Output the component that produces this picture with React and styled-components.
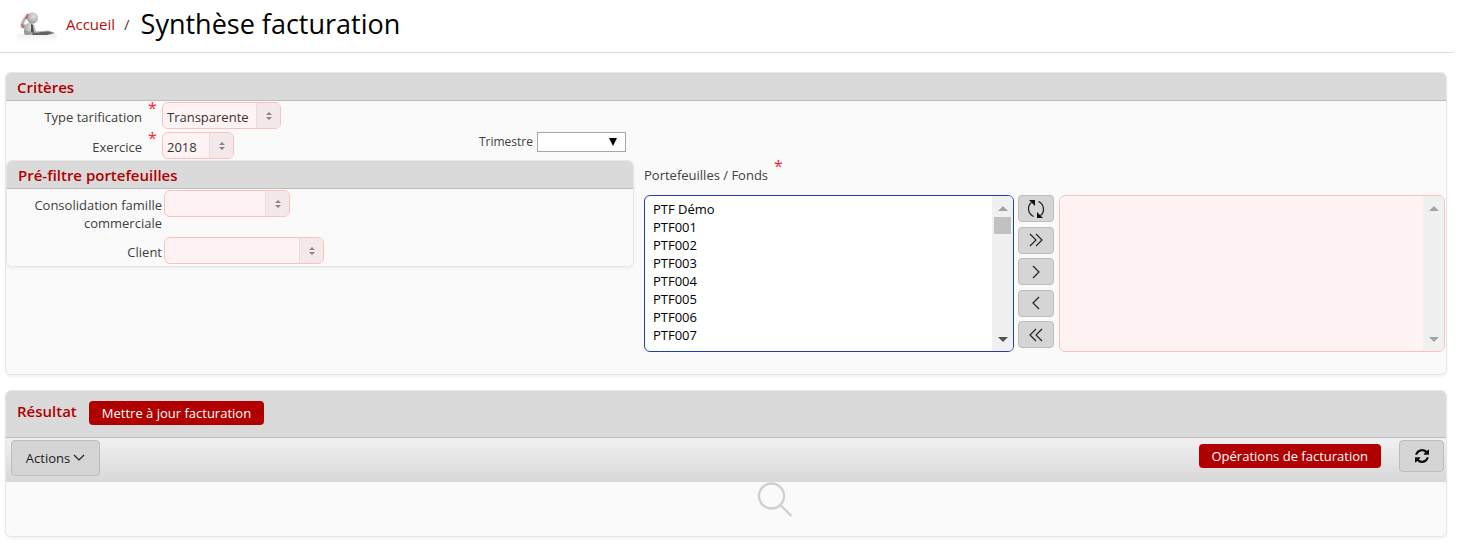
import React, {useState} from 'react';
import styled, {createGlobalStyle, css} from 'styled-components';

const portfolios = [
	'PTF Démo', 'PTF001', 'PTF002', 'PTF003', 'PTF004', 'PTF005', 'PTF006', 'PTF007',
	'PTF008', 'PTF009', 'PTF010', 'PTF011', 'PTF012', 'PTF013', 'PTF014', 'PTF015',
];

function Logo() {
	return (
		<svg width="40" height="36" viewBox="0 0 40 36" aria-hidden="true">
			<defs>
				<radialGradient id="skin" cx="0.6" cy="0.35" r="0.7">
					<stop offset="0" stopColor="#e2e2e2" />
					<stop offset="0.6" stopColor="#bababa" />
					<stop offset="1" stopColor="#8c8c8c" />
				</radialGradient>
				<linearGradient id="floor" x1="0" y1="0" x2="0" y2="1">
					<stop offset="0" stopColor="#f0f0f0" />
					<stop offset="1" stopColor="#ffffff" />
				</linearGradient>
			</defs>
			<rect x="0" y="28" width="40" height="8" fill="url(#floor)" />
			<g transform="translate(0 2)">
				<path d="M11 7 C8 10 6 13 5 17" stroke="#b5b5b5" strokeWidth="3" strokeLinecap="round" fill="none" />
				<path d="M8 18 C9 15 13 14 17 16 L19 23 L20 26 L9 27 C6 25 7 22 8 18 Z" fill="url(#skin)" />
				<circle cx="6" cy="18" r="2.500" fill="#adadad" />
				<path d="M7 25 C9 22 14 23 16 26 L8 27 Z" fill="#9c9c9c" />
				<circle cx="15.500" cy="10" r="5.500" fill="url(#skin)" />
				<path d="M11 6 L9 11" stroke="#d0483c" strokeWidth="1.300" />
				<path d="M5 16 L7 20" stroke="#d0483c" strokeWidth="1" />
				<path d="M14 16 L16 17 L17 25 L14 24 Z" fill="#4f4f4f" />
				<path d="M16 25 L31 23 L38 25 L30 27 L15 27 Z" fill="#626262" />
				<path d="M19 24 L31 23 L37 25" stroke="#a0a0a0" strokeWidth="0.800" fill="none" />
			</g>
		</svg>
	);
}

function SortArrows() {
	return (
		<svg width="6" height="8" viewBox="0 0 6 8" aria-hidden="true">
			<path d="M3 0 L6 3 H0 Z M3 8 L6 5 H0 Z" fill="#8a8486" />
		</svg>
	);
}

function Chevrons({d}) {
	return (
		<svg width="18" height="16" viewBox="0 0 18 16" fill="none" stroke="#222" strokeWidth="1.2" aria-hidden="true">
			<path d={d} />
		</svg>
	);
}

function SwapIcon() {
	return (
		<svg width="18" height="20" viewBox="0 0 18 20" aria-hidden="true">
			<path d="M6.5 17.5 C0.5 14.5 0 7 4.5 3.5 M11.5 2.5 C17.5 5.5 18 13 13.5 16.5" fill="none" stroke="#1b1b1b" strokeWidth="1.2" />
			<path d="M2 1 H8 V7 Z M16 19 H10 V13 Z" fill="#111" />
		</svg>
	);
}

function RefreshIcon() {
	return (
		<svg width="14" height="14" viewBox="0 0 1536 1536" aria-hidden="true">
			<path
				fill="#111"
				d="M1511 928q0 5-1 7-64 268-268 434.500T764 1536q-146 0-282.500-55T238 1324l-129 129q-19 19-45 19t-45-19-19-45V960q0-26 19-45t45-19h448q26 0 45 19t19 45-19 45l-137 137q71 66 161 102t187 36q134 0 250-65t186-179q11-17 53-117 8-23 30-23h192q13 0 22.500 9.500t9.500 22.500zm25-800v448q0 26-19 45t-45 19h-448q-26 0-45-19t-19-45 19-45l138-138Q969 256 768 256q-134 0-250 65T332 500q-11 17-53 117-8 23-30 23H50q-13 0-22.500-9.500T18 608v-7q65-268 270-434.500T768 0q146 0 284 55.500T1297 212l130-129q19-19 45-19t45 19 19 45z"
			/>
		</svg>
	);
}

function SearchIcon() {
	return (
		<svg width="36" height="36" viewBox="0 0 36 36" fill="none" stroke="#cfcfd2" strokeWidth="2.4" aria-hidden="true">
			<circle cx="14.500" cy="14" r="12.500" />
			<path d="M23.500 23 L34.500 34" />
		</svg>
	);
}

function ScrollBar({thumb}) {
	return (
		<ScrollTrack aria-hidden="true">
			<svg width="10" height="5" viewBox="0 0 10 5"><path d="M5 0 L10 5 H0 Z" fill="#a3a3a3" /></svg>
			{thumb && <ScrollThumb />}
			<ScrollEnd width="10" height="5" viewBox="0 0 10 5">
				<path d="M5 5 L10 0 H0 Z" fill={thumb ? '#505050' : '#a3a3a3'} />
			</ScrollEnd>
		</ScrollTrack>
	);
}

function PinkSelect({id, width, options, value}) {
	return (
		<SelectBox $width={width}>
			<select id={id} defaultValue={value}>
				{options.map(o => <option key={o}>{o}</option>)}
			</select>
			<SelectArrow><SortArrows /></SelectArrow>
		</SelectBox>
	);
}

export default function App() {
	const [available, setAvailable] = useState(portfolios);
	const [chosen, setChosen] = useState([]);
	const [picked, setPicked] = useState([]);

	const values = e => Array.from(e.target.selectedOptions, o => o.value);
	const moveTo = list => {
		setChosen(list);
		setAvailable(portfolios.filter(p => !list.includes(p)));
		setPicked([]);
	};

	return (
		<>
			<GlobalStyle />
			<Header>
				<Logo />
				<a href="#accueil">Accueil</a>
				<span>/</span>
				<h1>Synthèse facturation</h1>
			</Header>

			<Panel>
				<PanelHead><h2>Critères</h2></PanelHead>
				<Criteria>
					<div>
						<Fields>
							<Field>
								<Label htmlFor="type">Type tarification<Star>*</Star></Label>
								<PinkSelect id="type" width={119} options={['Transparente', 'Opaque']} value="Transparente" />
							</Field>
							<Field>
								<Label htmlFor="exercice">Exercice<Star>*</Star></Label>
								<PinkSelect id="exercice" width={72} options={['2017', '2018', '2019']} value="2018" />
								<Quarter>
									<label htmlFor="trimestre">Trimestre</label>
									<QuarterBox>
										<select id="trimestre"><option></option><option>T1</option><option>T2</option><option>T3</option><option>T4</option></select>
										<svg width="8" height="8" viewBox="0 0 8 8" aria-hidden="true"><path d="M0 0 H8 L4 8 Z" fill="#000" /></svg>
									</QuarterBox>
								</Quarter>
							</Field>
						</Fields>
						<SubPanel>
							<PanelHead><h2>Pré-filtre portefeuilles</h2></PanelHead>
							<Filters>
								<Field $gap>
									<Label htmlFor="famille" $narrow>Consolidation famille commerciale</Label>
									<PinkSelect id="famille" width={126} options={['']} />
								</Field>
								<Field $gap>
									<Label htmlFor="client" $narrow>Client</Label>
									<PinkSelect id="client" width={160} options={['']} />
								</Field>
							</Filters>
						</SubPanel>
					</div>
					<Funds>
						<FundsLabel htmlFor="fonds">Portefeuilles / Fonds<Star>*</Star></FundsLabel>
						<Shuttle>
							<ListBox $grow={370}>
								<select id="fonds" multiple value={picked} onChange={e => setPicked(values(e))}>
									{available.map(p => <option key={p}>{p}</option>)}
								</select>
								<ScrollBar thumb />
							</ListBox>
							<ShuttleButtons>
								<GreyButton type="button" aria-label="Réinitialiser" onClick={() => moveTo([])}><SwapIcon /></GreyButton>
								<GreyButton type="button" aria-label="Tout ajouter" onClick={() => moveTo(portfolios)}><Chevrons d="M3 2 L9 8 L3 14 M9 2 L15 8 L9 14" /></GreyButton>
								<GreyButton type="button" aria-label="Ajouter" onClick={() => moveTo([...chosen, ...picked.filter(p => !chosen.includes(p))])}><Chevrons d="M6 2 L12 8 L6 14" /></GreyButton>
								<GreyButton type="button" aria-label="Retirer" onClick={() => moveTo(chosen.filter(p => !picked.includes(p)))}><Chevrons d="M12 2 L6 8 L12 14" /></GreyButton>
								<GreyButton type="button" aria-label="Tout retirer" onClick={() => moveTo([])}><Chevrons d="M9 2 L3 8 L9 14 M15 2 L9 8 L15 14" /></GreyButton>
							</ShuttleButtons>
							<ListBox $grow={386} $pink>
								<select multiple aria-label="Sélection" value={picked} onChange={e => setPicked(values(e))}>
									{chosen.map(p => <option key={p}>{p}</option>)}
								</select>
								<ScrollBar />
							</ListBox>
						</Shuttle>
					</Funds>
				</Criteria>
			</Panel>

			<Panel>
				<ResultHead>
					<h2>Résultat</h2>
					<RedButton type="button">Mettre à jour facturation</RedButton>
				</ResultHead>
				<Toolbar>
					<ActionsButton type="button">
						Actions
						<svg width="12" height="8" viewBox="0 0 12 8" fill="none" stroke="#222" strokeWidth="1.2" aria-hidden="true"><path d="M1 1 L6 6 L11 1" /></svg>
					</ActionsButton>
					<RedButton type="button">Opérations de facturation</RedButton>
					<RefreshButton type="button" aria-label="Actualiser"><RefreshIcon /></RefreshButton>
				</Toolbar>
				<Empty><SearchIcon /></Empty>
			</Panel>
		</>
	);
}

const GlobalStyle = createGlobalStyle`
	* { box-sizing: border-box; }
	body {
		margin: 0;
		background: #fff;
		color: #404040;
		font-family: "Open Sans", "Noto Sans", sans-serif;
		font-size: 13px;
		line-height: 18px;
	}
	h1, h2 { margin: 0; }
	select, button { font: inherit; }
`;

const Header = styled.header`
	display: flex;
	align-items: center;
	height: 53px;
	margin: 0 3px 19px 0;
	padding: 0 0 4px 17px;
	border-bottom: 1px solid #dfdfdf;
	font-size: 15px;
	a {
		margin: 0 9px;
		color: #b80c0c;
		text-decoration: none;
	}
	h1 {
		margin-left: 11px;
		color: #000;
		font-size: 27px;
		line-height: 36px;
		font-weight: 400;
	}
`;

const Panel = styled.section`
	margin: 0 10px 15px 5px;
	border: 1px solid #e6e6e6;
	border-radius: 6px;
	background: #fafafa;
	box-shadow: 0 2px 3px rgba(0, 0, 0, 0.05);
	overflow: hidden;
`;

const SubPanel = styled(Panel)`
	margin: 1px 0 0;
`;

const PanelHead = styled.div`
	display: flex;
	align-items: center;
	height: 28px;
	padding-left: 11px;
	background: #dadada;
	border-bottom: 1px solid #bdbdbd;
	h2 {
		color: #b00000;
		font-size: 15px;
		line-height: 20px;
		font-weight: 600;
	}
`;

const ResultHead = styled(PanelHead)`
	align-items: flex-start;
	gap: 12px;
	height: 47px;
	padding-top: 10px;
`;

const Criteria = styled.div`
	display: grid;
	grid-template-columns: 628fr 812fr;
	padding: 1px 0 22px;
`;

const Fields = styled.div`
	display: flex;
	flex-direction: column;
	gap: 3px;
`;

const Filters = styled.div`
	display: flex;
	flex-direction: column;
	gap: 5px;
	padding: 1px 0 2px;
`;

const Field = styled.div`
	display: flex;
	align-items: flex-start;
	gap: ${props => props.$gap ? 2 : 0}px;
`;

const Label = styled.label`
	flex: none;
	width: ${props => props.$narrow ? 155 : 156}px;
	padding-top: 6px;
	padding-left: ${props => props.$narrow ? 20 : 0}px;
	text-align: right;
`;

const Star = styled.span`
	display: inline-block;
	width: 20px;
	padding-left: 6px;
	color: #ff1a33;
	font-size: 16px;
	line-height: 0;
	vertical-align: 8px;
	text-align: left;
`;

const SelectBox = styled.div`
	position: relative;
	width: ${props => props.$width}px;
	select {
		display: block;
		appearance: none;
		width: 100%;
		height: 27px;
		padding: 2px 26px 0 4px;
		border: 1px solid #ffbfbf;
		border-radius: 6px;
		background: #fff4f3;
		color: #333;
		outline: none;
	}
`;

const SelectArrow = styled.span`
	position: absolute;
	top: 1px;
	right: 1px;
	bottom: 1px;
	width: 24px;
	display: flex;
	align-items: center;
	justify-content: center;
	border-left: 1px solid #e8dcde;
	border-radius: 0 5px 5px 0;
	background: #f3e9ea;
	pointer-events: none;
`;

const Quarter = styled.div`
	display: flex;
	align-items: center;
	gap: 4px;
	margin: 0 8px 0 auto;
	font-size: 12px;
`;

const QuarterBox = styled.div`
	position: relative;
	select {
		display: block;
		appearance: none;
		width: 89px;
		height: 20px;
		border: 1px solid #a6a6a6;
		border-radius: 0;
		background: #fff;
	}
	svg {
		position: absolute;
		top: 6px;
		right: 9px;
		pointer-events: none;
	}
`;

const Funds = styled.div`
	padding: 64px 1px 0 10px;
`;

const FundsLabel = styled.label`
	display: block;
	height: 29px;
`;

const Shuttle = styled.div`
	display: flex;
	align-items: stretch;
`;

const ListBox = styled.div`
	display: flex;
	flex: ${props => props.$grow} 1 0;
	height: 157px;
	border: 1px solid #2040b0;
	border-radius: 6px;
	background: #fff;
	overflow: hidden;
	${props => props.$pink && css`
		border-color: #ffbfbf;
		background: #fff4f3;
	`}
	select {
		flex: 1;
		min-width: 0;
		margin: 4px 0 7px;
		padding: 0 8px;
		border: 0;
		outline: none;
		background: transparent;
		color: #000;
		scrollbar-width: none;
	}
	option {
		min-height: 18px;
		padding: 0;
		line-height: 18px;
	}
`;

const ScrollTrack = styled.div`
	display: flex;
	flex-direction: column;
	align-items: center;
	flex: none;
	width: 21px;
	padding: 10px 0 9px;
	background: #f0f0f0;
`;

const ScrollThumb = styled.div`
	width: 17px;
	height: 17px;
	margin-top: 6px;
	background: #c1c1c1;
`;

const ScrollEnd = styled.svg`
	margin-top: auto;
`;

const ShuttleButtons = styled.div`
	display: flex;
	flex-direction: column;
	justify-content: space-between;
	margin: 0 5px 4px 4px;
`;

const GreyButton = styled.button`
	display: flex;
	align-items: center;
	justify-content: center;
	width: 36px;
	height: 27px;
	padding: 0;
	border: 1px solid #bcbcbc;
	border-radius: 4px;
	background: #d5d5d5;
	color: #222;
	cursor: pointer;
`;

const ActionsButton = styled(GreyButton)`
	gap: 3px;
	width: 89px;
	height: 36px;
	margin-right: auto;
`;

const RefreshButton = styled(GreyButton)`
	width: 45px;
	height: 32px;
	margin-left: 18px;
`;

const RedButton = styled.button`
	height: 24px;
	padding: 0 13px;
	border: 0;
	border-radius: 4px;
	background: #b00000;
	color: #fff;
	cursor: pointer;
`;

const Toolbar = styled.div`
	display: flex;
	align-items: flex-start;
	height: 44px;
	padding: 2px 2px 0 5px;
	background: linear-gradient(#f1f1f1, #d8d8d8);
	${RedButton} {
		margin-top: 4px;
	}
`;

const Empty = styled.div`
	display: flex;
	justify-content: center;
	padding: 0 0 18px 98px;
`;
